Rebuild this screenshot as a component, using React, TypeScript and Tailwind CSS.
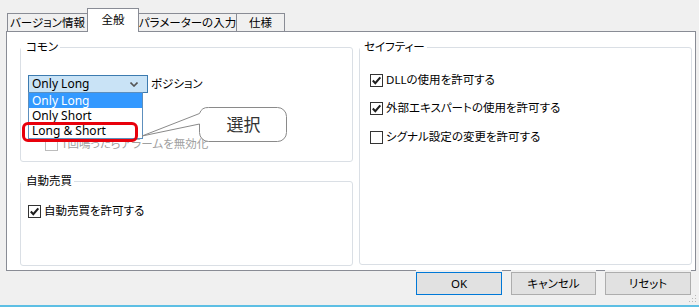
import React from "react";

const FONT = "font-['Noto_Sans','Noto_Sans_CJK_JP',sans-serif] [font-feature-settings:'palt']";

function Check({ checked, disabled }: { checked?: boolean; disabled?: boolean }) {
  return (
    <span
      className={`inline-flex w-[13px] h-[13px] shrink-0 items-center justify-center border bg-white ${
        disabled ? "border-[#bcbcbc]" : "border-[#333333]"
      }`}
    >
      {checked && (
        <svg width="11" height="11" viewBox="0 0 11 11">
          <path d="M1.8 5.6 L4.3 8.2 L9.3 2.4" fill="none" stroke="#1f1f1f" strokeWidth="2.1" />
        </svg>
      )}
    </span>
  );
}

function CheckRow({ label, checked, className = "" }: { label: string; checked?: boolean; className?: string }) {
  return (
    <div className={`flex items-center gap-[3px] h-[14px] text-[11.5px] leading-[14px] text-[#000] whitespace-nowrap ${className}`}>
      <Check checked={checked} />
      <span>{label}</span>
    </div>
  );
}

function Tab({ label, className }: { label: string; className: string }) {
  return (
    <div className={`flex justify-center whitespace-nowrap border-[#898c95] text-[11.5px] leading-[14px] ${className}`}>
      {label}
    </div>
  );
}

function Legend({ children, className }: { children: React.ReactNode; className: string }) {
  return (
    <legend className={`pr-[2px] text-[11.5px] leading-[14px] ${className}`}>
      <span className="block">{children}</span>
    </legend>
  );
}

export default function App() {
  return (
    <div className={`relative w-[699px] h-[307px] overflow-hidden bg-[#f0f0f0] flex flex-col pt-[8px] text-black ${FONT}`}>
      {/* tabs */}
      <div className="relative z-10 ml-[7px] flex items-end h-[23px]">
        <Tab label="バージョン情報" className="w-[80px] h-[18px] border-l border-t items-center bg-[#f0f0f0]" />
        <Tab label="全般" className="w-[52px] h-[24px] -mb-px border-l border-t border-r bg-white pt-[4px]" />
        <Tab label="パラメーターの入力" className="w-[98px] h-[18px] border-t border-r items-center bg-[#f0f0f0]" />
        <Tab label="仕様" className="w-[48px] h-[18px] border-t border-r items-center bg-[#f0f0f0]" />
      </div>

      {/* panel */}
      <div className="ml-[6px] w-[690px] h-[240px] border border-[#898c95] bg-white pl-[13px] pt-[8px] flex gap-[6px]">
        <div className="w-[333px] flex flex-col">
          <fieldset className="h-[122px] border border-[#dadfe5] rounded-[3px]">
            <Legend className="pl-[5px]">コモン</Legend>
            <div className="pl-[7px]">
              <div className="mt-[21px] flex items-center">
                <div className="w-[120px] h-[18px] border border-[#3c7bb0] bg-[#c9e3f6] flex items-center pl-[3px] pr-[9px] text-[12px]">
                  <span className="flex-1 leading-[14px]">Only Long</span>
                  <svg width="8" height="5" viewBox="0 0 8 5">
                    <path d="M0.5 0.5 L4 4 L7.5 0.5" fill="none" stroke="#555" strokeWidth="1.6" />
                  </svg>
                </div>
                <span className="ml-[3px] text-[11.5px] leading-[14px]">ポジション</span>
              </div>
              <div className="mt-[44px] ml-[17px] flex items-center gap-[3px] h-[14px] text-[11.5px] leading-[14px] text-[#a0a0a0] whitespace-nowrap">
                <Check disabled />
                <span>1回鳴ったらアラームを無効化</span>
              </div>
            </div>
          </fieldset>
          <fieldset className="mt-[12px] h-[92px] border border-[#dadfe5] rounded-[3px]">
            <Legend className="pl-[5px]">自動売買</Legend>
            <div className="pl-[7px]">
              <CheckRow className="mt-[16px]" label="自動売買を許可する" checked />
            </div>
          </fieldset>
        </div>
        <div className="w-[333px]">
          <fieldset className="h-[225px] border border-[#dadfe5] rounded-[3px]">
            <Legend className="pl-[4px]">セイフティー</Legend>
            <div className="pl-[10px]">
              <CheckRow className="mt-[19px]" label="DLLの使用を許可する" checked />
              <CheckRow className="mt-[14px]" label="外部エキスパートの使用を許可する" checked />
              <CheckRow className="mt-[15px]" label="シグナル設定の変更を許可する" />
            </div>
          </fieldset>
        </div>
      </div>

      {/* buttons */}
      <div className="-mt-[1px] relative z-10 flex justify-end gap-[9px] pr-[8px]">
        {[
          { t: "OK", b: "border-[#0078d7]", w: "w-[86px]" },
          { t: "キャンセル", b: "border-[#adadad]", w: "w-[85px]" },
          { t: "リセット", b: "border-[#adadad]", w: "w-[86px]" },
        ].map((x) => (
          <div key={x.t} className="bg-[#f0f0f0] pt-[2px]">
            <div className={`${x.w} h-[23px] border ${x.b} bg-[#e1e1e1] flex items-center justify-center text-[11.5px] leading-[14px]`}>
              {x.t}
            </div>
          </div>
        ))}
      </div>

      <div className="flex-1" />
      <div className="h-[2px] bg-[#5dbfe4]" />

      {/* resize grip */}
      <svg className="absolute right-[2px] bottom-[4px]" width="8" height="8" viewBox="0 0 8 8">
        <rect x="6" y="0" width="1" height="1" fill="#b8b8b8" />
        <rect x="3" y="3" width="1" height="1" fill="#b8b8b8" />
        <rect x="6" y="3" width="1" height="1" fill="#b8b8b8" />
        <rect x="0" y="6" width="1" height="1" fill="#b8b8b8" />
        <rect x="3" y="6" width="1" height="1" fill="#b8b8b8" />
        <rect x="6" y="6" width="1" height="1" fill="#b8b8b8" />
      </svg>

      {/* dropdown list overlay */}
      <div className="absolute left-[28px] top-[92px] w-[115px] border border-[#5d8fbd] bg-white text-[12px] z-20">
        <div className="h-[15px] leading-[15px] pl-[3px] bg-[#3399ff] text-white">Only Long</div>
        <div className="h-[15px] leading-[15px] pl-[3px]">Only Short</div>
        <div className="h-[15px] leading-[15px] pl-[3px]">Long &amp; Short</div>
      </div>

      {/* red highlight */}
      <div className="absolute left-[22px] top-[122px] w-[116px] h-[20px] border-[3px] border-[#e8000b] rounded-[6px] z-30" />

      {/* callout */}
      <div className="absolute left-[140px] top-[105px] w-[150px] h-[40px] z-30">
        <svg className="absolute inset-0" width="150" height="40" viewBox="0 0 150 40">
          <path
            d="M68.5 2.5 H137.5 A9 9 0 0 1 146.5 11.5 V27.5 A9 9 0 0 1 137.5 36.5 H68.5 A9 9 0 0 1 59.5 27.5 V19 L2 31 L59.5 8.5 A9 9 0 0 1 68.5 2.5 Z"
            fill="#ffffff"
            stroke="#8a8a8a"
            strokeWidth="1"
          />
        </svg>
        <div className="absolute left-[60px] top-[2px] w-[87px] h-[35px] flex items-center justify-center text-[17px] text-[#333]">
          選択
        </div>
      </div>
    </div>
  );
}
